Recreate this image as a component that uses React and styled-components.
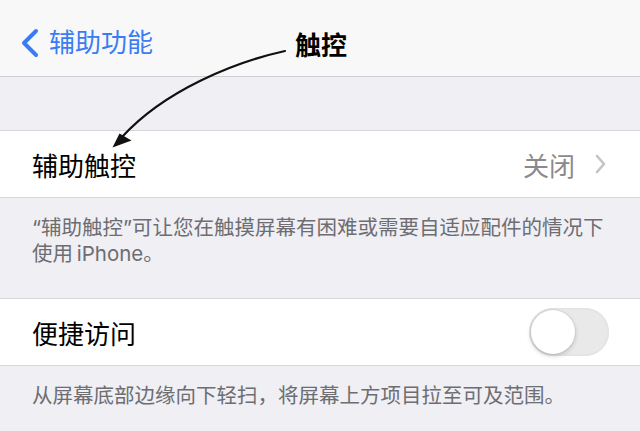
import React from "react";
import styled, { createGlobalStyle } from "styled-components";

const GlobalStyle = createGlobalStyle`
  html, body { margin: 0; padding: 0; background: #efeff4; }
  body { font-family: "Inter", "Noto Sans CJK SC", sans-serif; }
  * { box-sizing: border-box; }
`;

const Page = styled.div`
  position: relative;
  width: 640px;
  height: 431px;
  overflow: hidden;
  background: #efeff4;
`;

const NavBar = styled.div`
  height: 77px;
  background: #f8f8f8;
  border-bottom: 1px solid #cfcfd3;
  display: grid;
  grid-template-columns: 1fr auto 1fr;
  align-items: center;
  padding: 0 20px 0 20px;
`;

const BackButton = styled.div`
  display: flex;
  align-items: center;
  gap: 9px;
  color: #3a7cf3;
  font-size: 26px;
  line-height: 30px;
  padding-top: 10px;
`;

const Title = styled.div`
  font-size: 26px;
  font-weight: 700;
  color: #000;
  padding-top: 10px;
  padding-left: 2px;
`;

const Spacer = styled.div`
  height: ${(p) => p.h}px;
`;

const Group = styled.div`
  background: #fff;
  border-top: 1px solid #d6d6da;
  border-bottom: 1px solid #d6d6da;
`;

const Cell = styled.div`
  height: 66px;
  display: flex;
  align-items: center;
  justify-content: space-between;
  padding: 0 ${(p) => p.pr}px 0 32px;
`;

const Label = styled.span`
  font-size: 26px;
  color: #000;
`;

const Value = styled.div`
  display: flex;
  align-items: center;
  gap: 20px;
  font-size: 26px;
  color: #8a8a8e;
`;

const Footer = styled.div`
  height: ${(p) => p.h}px;
  padding: ${(p) => p.pt}px 30px 0 32px;
  font-size: 20.5px;
  line-height: 25.5px;
  color: #6d6d72;
`;

const Switch = styled.div`
  position: relative;
  width: 80px;
  height: 48px;
  border-radius: 24px;
  background: #e9e9ea;
  box-shadow: inset 0 0 0 1.5px #e3e3e5;
`;

const Knob = styled.div`
  position: absolute;
  left: 2px;
  top: 2px;
  width: 44px;
  height: 44px;
  border-radius: 50%;
  background: #fff;
  box-shadow: 0 2px 5px rgba(0, 0, 0, 0.18), 0 0 0 1px rgba(0, 0, 0, 0.05);
`;

const Overlay = styled.svg`
  position: absolute;
  left: 0;
  top: 0;
  pointer-events: none;
`;

const footerText = "“辅助触控”可让您在触摸屏幕有困难或需要自适应配件的情况下使用\u2009iPhone。";

export default function App() {
  return (
    <Page>
      <GlobalStyle />
      <NavBar>
        <BackButton>
          <svg width="20" height="30" viewBox="0 0 20 30">
            <path d="M16 3 L4 15 L16 27" fill="none" stroke="#3a7cf3" strokeWidth="4" strokeLinecap="round" strokeLinejoin="round" />
          </svg>
          <span>辅助功能</span>
        </BackButton>
        <Title>触控</Title>
        <div />
      </NavBar>
      <Spacer h={53} />
      <Group>
        <Cell pr={34}>
          <Label>辅助触控</Label>
          <Value>
            <span>关闭</span>
            <svg width="11" height="20" viewBox="0 0 11 20">
              <path d="M2 2 L9 10 L2 18" fill="none" stroke="#c4c4c8" strokeWidth="2.6" strokeLinecap="round" strokeLinejoin="round" />
            </svg>
          </Value>
        </Cell>
      </Group>
      <Footer h={100} pt={17}>{footerText}</Footer>
      <Group>
        <Cell pr={31}>
          <Label>便捷访问</Label>
          <Switch>
            <Knob />
          </Switch>
        </Cell>
      </Group>
      <Footer h={64} pt={17}>从屏幕底部边缘向下轻扫，将屏幕上方项目拉至可及范围。</Footer>
      <Overlay width="640" height="431" viewBox="0 0 640 431">
        <path d="M285 51 C 235 62, 165 90, 122 137" fill="none" stroke="#111" strokeWidth="2.2" strokeLinecap="round" />
        <path d="M112.5 147.5 L119.5 133.5 L131.5 140.5 Z" fill="#111" />
      </Overlay>
    </Page>
  );
}
